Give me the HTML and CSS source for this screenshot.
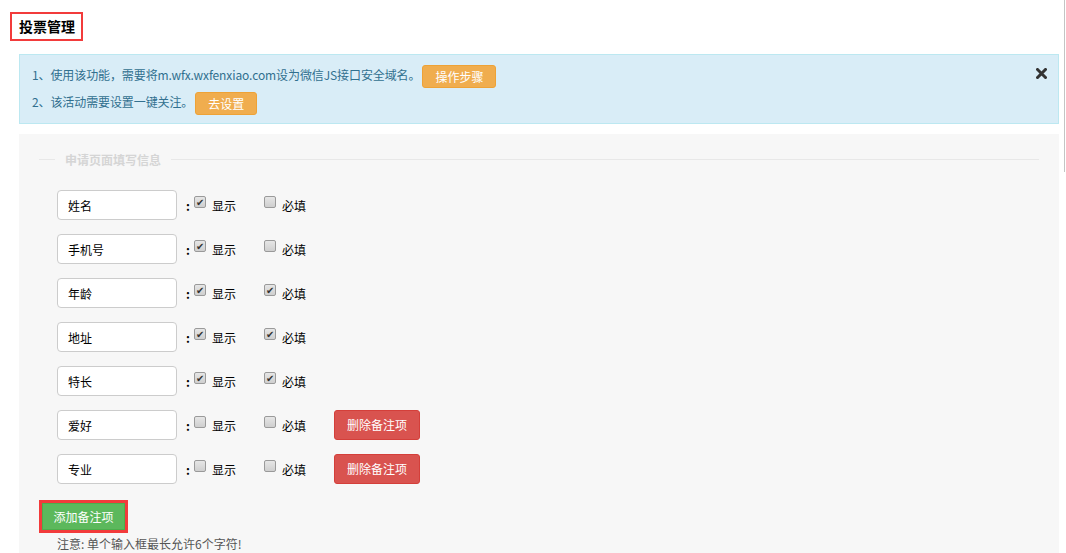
FILE: index.html
```html
<!DOCTYPE html>
<html lang="zh-CN">
<head>
    <meta charset="UTF-8">
    <meta name="viewport" content="width=device-width, initial-scale=1.0">
    <title>投票管理</title>
    <link rel="stylesheet" href="styles.css">
</head>
<body>

<div class="page">
    <div class="title-wrap">
        <h2 class="title">投票管理</h2>
    </div>

    <!-- 提示 -->
    <div class="alert">
        <span class="alert-close">
            <svg width="11" height="11" viewBox="0 0 11 11"><path d="M1.5 1.5 L9.5 9.5 M9.5 1.5 L1.5 9.5" stroke="#333" stroke-width="3" stroke-linecap="square"/></svg>
        </span>
        <p class="alert-line">1、使用该功能，需要将m.wfx.wxfenxiao.com设为微信JS接口安全域名。<a class="btn btn-warning">操作步骤</a></p>
        <p class="alert-line">2、该活动需要设置一键关注。<a class="btn btn-warning">去设置</a></p>
    </div>

    <!-- 表单 -->
    <div class="panel">
        <div class="legend"><span>申请页面填写信息</span></div>

        <div class="field-row">
            <input class="field-input" type="text" value="姓名">
            <span class="colon">:</span>
            <label class="check"><span class="box on"></span>显示</label>
            <label class="check"><span class="box"></span>必填</label>
        </div>
        <div class="field-row">
            <input class="field-input" type="text" value="手机号">
            <span class="colon">:</span>
            <label class="check"><span class="box on"></span>显示</label>
            <label class="check"><span class="box"></span>必填</label>
        </div>
        <div class="field-row">
            <input class="field-input" type="text" value="年龄">
            <span class="colon">:</span>
            <label class="check"><span class="box on"></span>显示</label>
            <label class="check"><span class="box on"></span>必填</label>
        </div>
        <div class="field-row">
            <input class="field-input" type="text" value="地址">
            <span class="colon">:</span>
            <label class="check"><span class="box on"></span>显示</label>
            <label class="check"><span class="box on"></span>必填</label>
        </div>
        <div class="field-row">
            <input class="field-input" type="text" value="特长">
            <span class="colon">:</span>
            <label class="check"><span class="box on"></span>显示</label>
            <label class="check"><span class="box on"></span>必填</label>
        </div>
        <div class="field-row">
            <input class="field-input" type="text" value="爱好">
            <span class="colon">:</span>
            <label class="check"><span class="box"></span>显示</label>
            <label class="check"><span class="box"></span>必填</label>
            <a class="btn btn-danger">删除备注项</a>
        </div>
        <div class="field-row">
            <input class="field-input" type="text" value="专业">
            <span class="colon">:</span>
            <label class="check"><span class="box"></span>显示</label>
            <label class="check"><span class="box"></span>必填</label>
            <a class="btn btn-danger">删除备注项</a>
        </div>

        <div class="add-wrap">
            <a class="btn btn-success">添加备注项</a>
        </div>
        <p class="note">注意: 单个输入框最长允许6个字符!</p>
    </div>
</div>

<div class="scroll-thumb"></div>

</body>
</html>
```

FILE: styles.css
```css
body {
    margin: 0;
    padding: 0;
    font-family: "Noto Sans CJK SC", "Liberation Sans", sans-serif;
    font-size: 12px;
    color: #333;
    background-color: #fff;
}
.page {
    padding: 12px 7px 0 19px;
}
.title-wrap {
    margin-left: -9px;
    height: 42px;
}
.title {
    display: inline-block;
    margin: 0;
    padding: 0 6px 0 7px;
    height: 25px;
    line-height: 25px;
    font-size: 14px;
    font-weight: bold;
    color: #000;
    border: 2px solid #f23b3b;
}
.alert {
    position: relative;
    box-sizing: border-box;
    width: 1040px;
    height: 70px;
    padding: 7px 12px 0;
    background-color: #d9edf7;
    border: 1px solid #bce8f1;
    color: #31708f;
    letter-spacing: -0.1px;
}
.alert-line {
    margin: 0;
    height: 27px;
    line-height: 25px;
}
.alert-close {
    position: absolute;
    right: 11px;
    top: 10px;
}
.btn {
    display: inline-block;
    box-sizing: border-box;
    padding: 0 12px;
    height: 23px;
    line-height: 21px;
    font-size: 12px;
    color: #fff;
    letter-spacing: 0;
    border: 1px solid transparent;
    border-radius: 3px;
    vertical-align: middle;
    cursor: pointer;
}
.btn-warning {
    background-color: #f0ad4e;
    border-color: #eea236;
    margin-left: 2px;
}
.btn-danger {
    background-color: #d9534f;
    border-color: #d43f3a;
    height: 30px;
    line-height: 28px;
    width: 86px;
    padding: 0;
    text-align: center;
}
.btn-success {
    background-color: #5cb85c;
    border-color: #4cae4c;
    height: 27px;
    line-height: 25px;
    width: 83px;
    padding: 0;
    text-align: center;
    border-radius: 0;
}
.panel {
    box-sizing: border-box;
    width: 1040px;
    height: 420px;
    margin-top: 10px;
    padding: 16px 20px 0 20px;
    background-color: #f7f7f7;
}
.legend {
    display: flex;
    align-items: center;
    width: 1000px;
    height: 18px;
    color: #d5d5d5;
    font-weight: bold;
    margin-bottom: 22px;
}
.legend::before {
    content: "";
    width: 16px;
    border-top: 1px solid #e8e8e8;
}
.legend::after {
    content: "";
    flex: 1;
    border-top: 1px solid #e8e8e8;
}
.legend span {
    padding: 0 10px;
}
.field-row {
    display: flex;
    align-items: center;
    height: 30px;
    margin-bottom: 14px;
    padding-left: 18px;
}
.field-input {
    box-sizing: border-box;
    width: 120px;
    height: 30px;
    padding: 0 10px;
    font-family: "Noto Sans CJK SC", "Liberation Sans", sans-serif;
    font-size: 12px;
    color: #000;
    background-color: #fff;
    border: 1px solid #ccc;
    border-radius: 4px;
    outline: none;
}
.colon {
    margin-left: 9px;
    width: 8px;
    font-weight: bold;
    color: #000;
}
.check {
    display: flex;
    align-items: center;
    width: 70px;
    color: #000;
}
.box {
    position: relative;
    box-sizing: border-box;
    width: 12px;
    height: 12px;
    margin: -6px 6px 0 0;
    border: 1px solid #9a9a9a;
    border-radius: 2px;
    background: linear-gradient(#e6e6e6, #cfcfcf);
}
.box.on::after {
    content: "✔";
    position: absolute;
    left: 1px;
    top: -3px;
    font-size: 10px;
    color: #333;
}
.add-wrap {
    display: inline-block;
    margin-top: 2px;
    border: 3px solid #f23b3b;
}
.note {
    margin: 2px 0 0 18px;
    color: #555;
    line-height: 18px;
}
.scroll-thumb {
    position: absolute;
    top: 0;
    left: 1064px;
    width: 1px;
    height: 172px;
    background-color: #c4c4c4;
}
```
